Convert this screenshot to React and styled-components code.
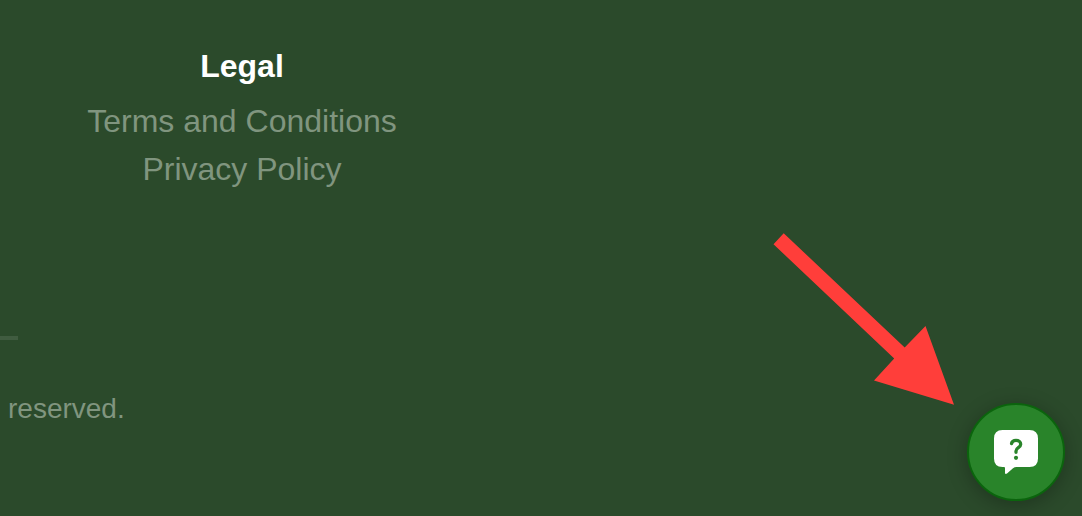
import React from "react";
import styled, { createGlobalStyle } from "styled-components";

const GlobalStyle = createGlobalStyle`
  *, *::before, *::after { box-sizing: border-box; }
  body {
    margin: 0;
    background: #2b4a2b;
    font-family: "Liberation Sans", Arial, sans-serif;
  }
`;

const Footer = styled.footer`
  display: flex;
  flex-direction: column;
  min-height: 100vh;
  padding-top: 42px;
  overflow: hidden;
  color: #80957f;
`;

const LinkColumn = styled.nav`
  display: flex;
  flex-direction: column;
  align-items: center;
  width: 100%;
  max-width: 484px;
  font-size: 32px;
  line-height: 48px;
`;

const Heading = styled.h2`
  margin: 0 0 7px;
  color: #fff;
  font-size: 32px;
  font-weight: 700;
`;

const FooterLink = styled.a`
  color: inherit;
  text-decoration: none;
`;

const Divider = styled.hr`
  width: 18px;
  height: 4px;
  margin: 143px 0 0;
  border: 0;
  background: #405c40;
`;

const Copyright = styled.p`
  margin: 48px 0 0;
  padding: 0 8px;
  font-size: 28px;
  line-height: 42px;
`;

const HelpButton = styled.button`
  position: fixed;
  right: 17px;
  bottom: 15px;
  display: flex;
  align-items: center;
  justify-content: center;
  width: 98px;
  height: 98px;
  padding: 0;
  border: 2px solid #0b640d;
  border-radius: 50%;
  background: #29842a;
  box-shadow: 0 4px 20px rgba(0, 0, 0, 0.28);
  cursor: pointer;
`;

const Arrow = styled.svg`
  position: fixed;
  right: 128px;
  bottom: 111px;
  width: 181px;
  height: 172px;
  pointer-events: none;
`;

function HelpIcon() {
  return (
    <svg width="44" height="44" viewBox="0 0 44 44" aria-hidden="true">
      <path
        fill="#fff"
        d="M8.5 0H35.5Q44 0 44 8.5V28.5Q44 37 35.5 37H22.5Q20.5 37 19 38.3L13 43.6Q11 44.8 11 42.4V38Q11 37 10 37H8.5Q0 37 0 28.5V8.5Q0 0 8.5 0Z"
      />
      <path
        d="M17.5 13.6C17.9 11.6 19.6 10.4 22 10.4C24.8 10.4 26.7 12 26.7 14.3C26.7 17.8 22 17.6 22 21V22.3"
        fill="none"
        stroke="#29842a"
        strokeWidth="3.3"
        strokeLinecap="round"
        strokeLinejoin="round"
      />
      <circle cx="22" cy="27.8" r="2.1" fill="#29842a" />
    </svg>
  );
}

export default function App() {
  return (
    <>
      <GlobalStyle />
      <Footer>
        <LinkColumn aria-labelledby="legal-heading">
          <Heading id="legal-heading">Legal</Heading>
          <FooterLink href="#terms">Terms and Conditions</FooterLink>
          <FooterLink href="#privacy">Privacy Policy</FooterLink>
        </LinkColumn>
        <Divider />
        <Copyright>reserved.</Copyright>
      </Footer>
      <Arrow viewBox="0 0 181 172" aria-hidden="true">
        <path
          fill="#ff3e3a"
          d="M10.7 0.2L131.7 114.6L152.5 93L181 171.8L101 147.6L121.2 125.6L0.5 11.2Z"
        />
      </Arrow>
      <HelpButton type="button" aria-label="Help">
        <HelpIcon />
      </HelpButton>
    </>
  );
}
